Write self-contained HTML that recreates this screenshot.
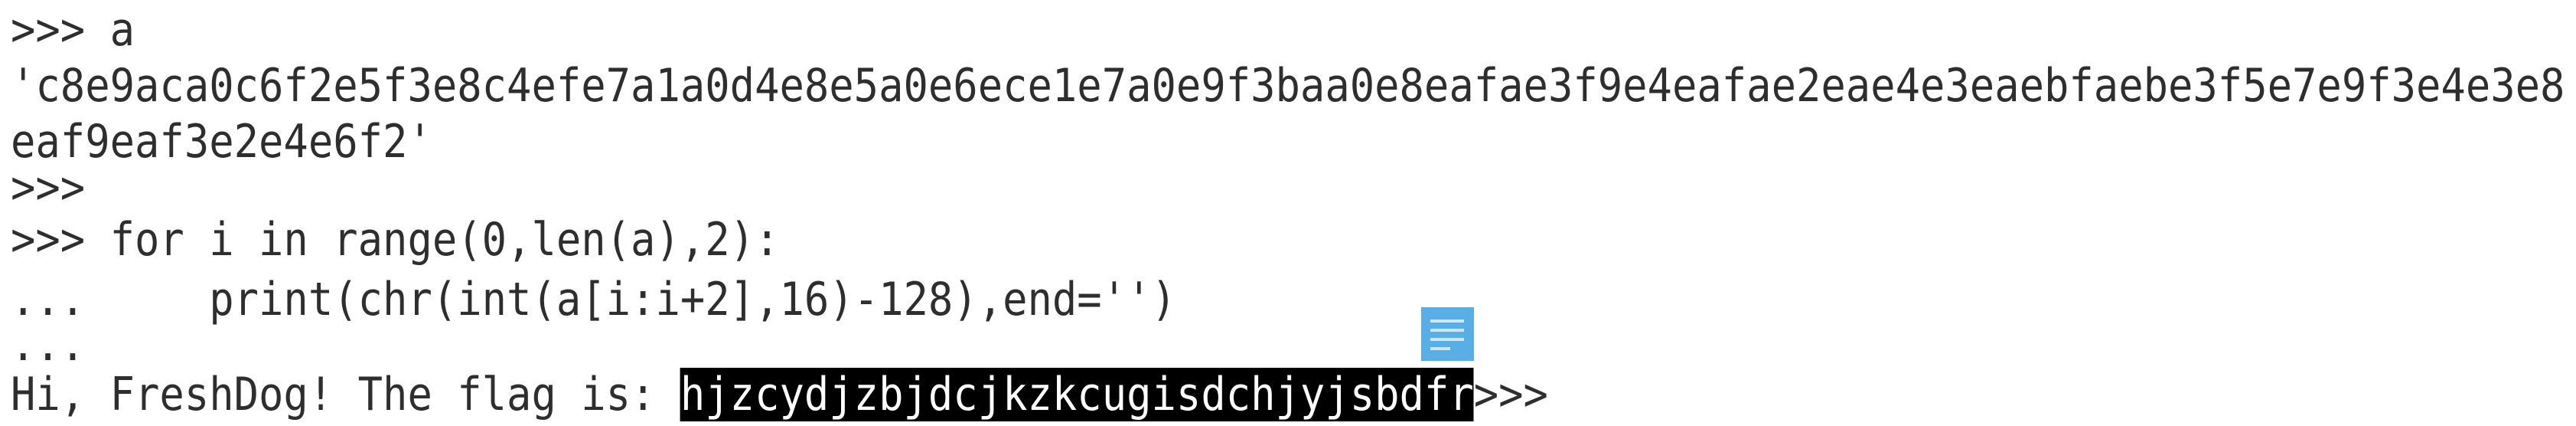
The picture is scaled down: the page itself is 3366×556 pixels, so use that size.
<!DOCTYPE html>
<html><head><meta charset="utf-8"><style>
html,body{margin:0;padding:0;background:#fff;width:3366px;height:556px;overflow:hidden;position:relative}
.l{position:absolute;left:14px;font-family:"DejaVu Sans Mono","Liberation Mono",monospace;font-size:60px;line-height:60px;height:60px;color:#2e2e2e;white-space:pre;transform:scaleX(0.897);transform-origin:0 50%}
.hl{background:#000;color:#fff}
#ic{position:absolute;left:1857px;top:401px;width:69px;height:70px;background:#5aaee6}
#ic i{position:absolute;left:12px;height:4px;background:#cfe7f8}
</style></head><body>
<div class="l" style="top:9px">&gt;&gt;&gt; a</div>
<div class="l" style="top:82px">'c8e9aca0c6f2e5f3e8c4efe7a1a0d4e8e5a0e6ece1e7a0e9f3baa0e8eafae3f9e4eafae2eae4e3eaebfaebe3f5e7e9f3e4e3e8</div>
<div class="l" style="top:155px">eaf9eaf3e2e4e6f2'</div>
<div class="l" style="top:215px">&gt;&gt;&gt;</div>
<div class="l" style="top:283px">&gt;&gt;&gt; for i in range(0,len(a),2):</div>
<div class="l" style="top:361px">...     print(chr(int(a[i:i+2],16)-128),end='')</div>
<div class="l" style="top:420px">...</div>
<div class="l" style="top:485px">Hi, FreshDog! The flag is: <span class="hl">hjzcydjzbjdcjkzkcugisdchjyjsbdfr</span>&gt;&gt;&gt;</div>
<div id="ic"><i style="top:16px;width:44px"></i><i style="top:28px;width:44px"></i><i style="top:40px;width:44px"></i><i style="top:52px;width:26px"></i></div>
</body></html>
